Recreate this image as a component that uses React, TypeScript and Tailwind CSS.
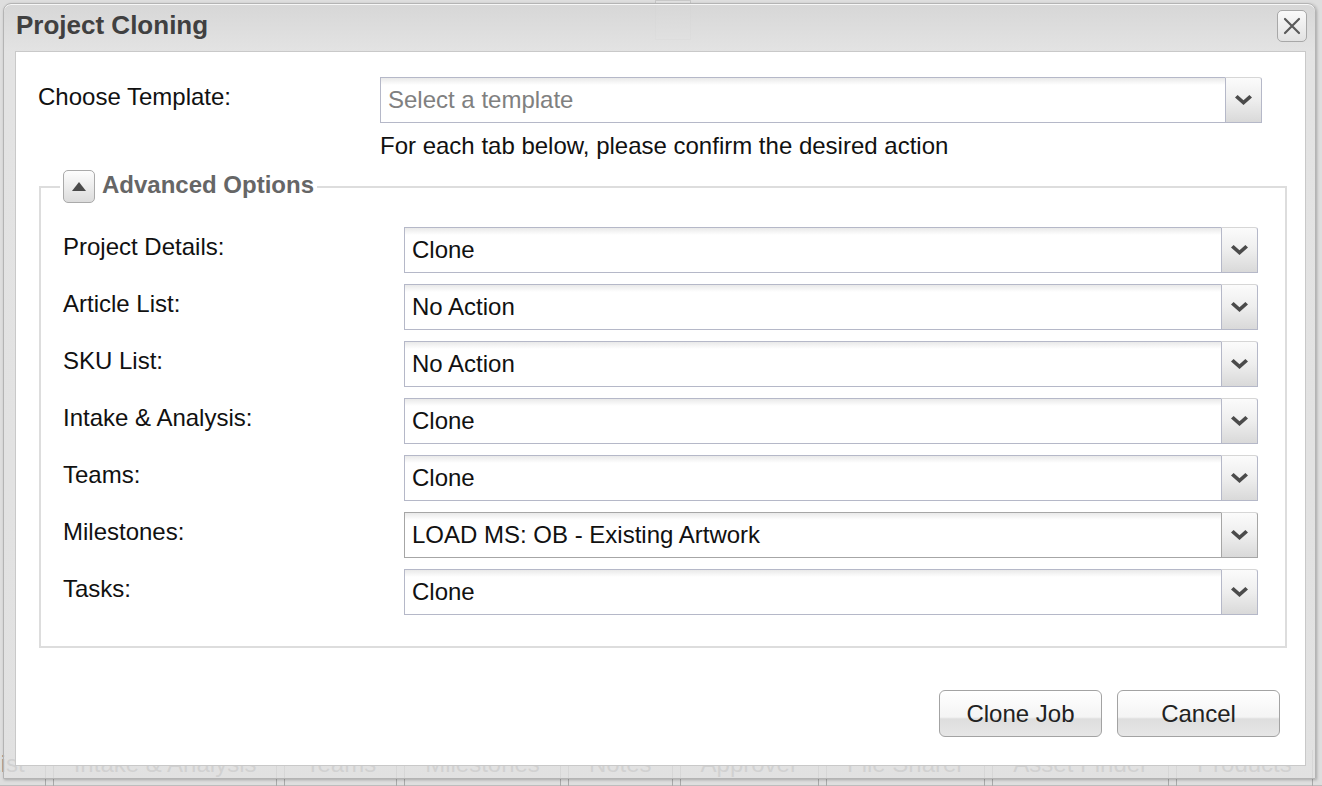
import React from "react";

const FONT = "font-['Liberation_Sans',Arial,Helvetica,sans-serif]";

function Chevron() {
  return (
    <svg width="17" height="10" viewBox="0 0 17 10">
      <polygon points="0,2.5 2.6,0 8.5,5.2 14.4,0 17,2.5 8.5,10" fill="#4b4b4b" />
    </svg>
  );
}

function Select({ value, placeholder, dark }: { value?: string; placeholder?: string; dark?: boolean }) {
  const border = dark ? "border-[#a6a6a6]" : "border-[#b5b8c8]";
  return (
    <div className="flex h-[46px] w-full">
      <div
        className={`flex flex-1 items-center border border-r-0 ${border} bg-[linear-gradient(to_bottom,#e9e9e9_0px,#ffffff_7px,#ffffff_100%)] pl-[7px]`}
      >
        {value ? (
          <span className="text-[24px] leading-none text-[#111]">{value}</span>
        ) : (
          <span className="text-[24px] leading-none text-[#808080]">{placeholder}</span>
        )}
      </div>
      <div
        className={`flex w-[37px] items-center justify-center rounded-tr-[3px] border ${border} border-t-[#d6d6d6] bg-[linear-gradient(to_bottom,#fbfbfb_0%,#eeeeee_50%,#d9d9d9_100%)]`}
      >
        <Chevron />
      </div>
    </div>
  );
}

const rows: { label: string; value: string; dark?: boolean }[] = [
  { label: "Project Details:", value: "Clone" },
  { label: "Article List:", value: "No Action" },
  { label: "SKU List:", value: "No Action" },
  { label: "Intake & Analysis:", value: "Clone" },
  { label: "Teams:", value: "Clone" },
  { label: "Milestones:", value: "LOAD MS: OB - Existing Artwork", dark: true },
  { label: "Tasks:", value: "Clone" },
];

const tabs = ["Article List", "Intake & Analysis", "Teams", "Milestones", "Notes", "Approver", "File Sharer", "Asset Finder", "Products"];

function Button({ children }: { children: React.ReactNode }) {
  return (
    <button className="h-[47px] w-[163px] rounded-[6px] border border-[#a3a3a3] bg-[linear-gradient(to_bottom,#ffffff_0%,#f4f4f4_58%,#dedede_62%,#e6e6e6_100%)] text-[24px] leading-none text-[#222] shadow-[inset_0_1px_0_#ffffff]">
      {children}
    </button>
  );
}

export default function App() {
  return (
    <div className={`relative h-[786px] w-[1322px] overflow-hidden bg-[#dedede] ${FONT}`}>
      {/* background page (seen through the window frame) */}
      <div className="flex h-[742px] flex-col">
        <div className="ml-[655px] mt-0 h-[40px] w-[36px] border border-[#c8c8c8] bg-[#e2e2e2]" />
      </div>
      <div className="flex h-[44px] items-start border-b border-[#bdbdbd] pt-[8px]">
        {tabs.map((t, i) => (
          <div
            key={t}
            className={`h-[36px] shrink-0 border-x border-[#a9a9a9] px-[20px] text-[24px] leading-[28px] text-[#8c8c8c] ${i === 0 ? "ml-[-107px]" : "ml-[7px]"}`}
          >
            {t}
          </div>
        ))}
      </div>

      {/* window */}
      <div className="absolute left-[3px] top-[3px] flex h-[776px] w-[1313px] flex-col rounded-t-[8px] border border-[#b4b4b4] bg-[linear-gradient(to_bottom,rgba(214,214,214,0.92)_0px,rgba(228,228,228,0.85)_48px,rgba(226,226,226,0.8)_100%)] shadow-[1px_1px_3px_rgba(0,0,0,0.25),inset_0_1px_0_rgba(255,255,255,0.8)]">
        {/* header */}
        <div className="flex h-[47px] items-start justify-between pl-[12px] pr-[8px]">
          <div className="pt-[6px] text-[26px] font-bold leading-[30px] text-[#404040]">Project Cloning</div>
          <button className="mt-[6px] flex h-[32px] w-[30px] items-center justify-center rounded-[5px] border border-[#a8a8a8] bg-[linear-gradient(to_bottom,#fafafa,#e2e2e2)]">
            <svg width="20" height="20" viewBox="0 0 20 20">
              <path d="M3 3 L17 17 M17 3 L3 17" stroke="#5a5a5a" strokeWidth="2.2" strokeLinecap="round" />
            </svg>
          </button>
        </div>

        {/* body */}
        <div className="ml-[11px] flex h-[715px] w-[1291px] flex-col border border-[#c9c9c9] bg-white">
          <div className="flex pl-[22px] pr-[43px] pt-[25px]">
            <div className="w-[342px] shrink-0 pt-[6px] text-[24px] leading-[28px] text-[#111]">Choose Template:</div>
            <div className="flex-1">
              <Select placeholder="Select a template" />
            </div>
          </div>
          <div className="ml-[364px] mt-[9px] text-[24px] leading-[28px] text-[#111]">
            For each tab below, please confirm the desired action
          </div>

          <fieldset className="ml-[23px] mr-[18px] mt-[10px] border-2 border-[#dddddd] pb-[31px] pl-[22px] pr-[27px] pt-[24px]">
            <legend className="ml-[-3px] flex items-center gap-[7px] px-[3px]">
              <span className="flex h-[33px] w-[32px] items-center justify-center rounded-[5px] border border-[#aaaaaa] bg-[linear-gradient(to_bottom,#fdfdfd,#dcdcdc)]">
                <svg width="14" height="9" viewBox="0 0 14 9">
                  <polygon points="7,0 14,9 0,9" fill="#4a4a4a" />
                </svg>
              </span>
              <span className="pb-[3px] text-[24px] font-bold leading-[28px] text-[#666]">Advanced Options</span>
            </legend>
            <div className="flex flex-col gap-[11px]">
              {rows.map((r) => (
                <div key={r.label} className="flex">
                  <div className="w-[341px] shrink-0 pt-[6px] text-[24px] leading-[28px] text-[#111]">{r.label}</div>
                  <div className="flex-1">
                    <Select value={r.value} dark={r.dark} />
                  </div>
                </div>
              ))}
            </div>
          </fieldset>

          <div className="mt-[42px] flex justify-end gap-[15px] pr-[25px]">
            <Button>Clone Job</Button>
            <Button>Cancel</Button>
          </div>
        </div>
      </div>
    </div>
  );
}
